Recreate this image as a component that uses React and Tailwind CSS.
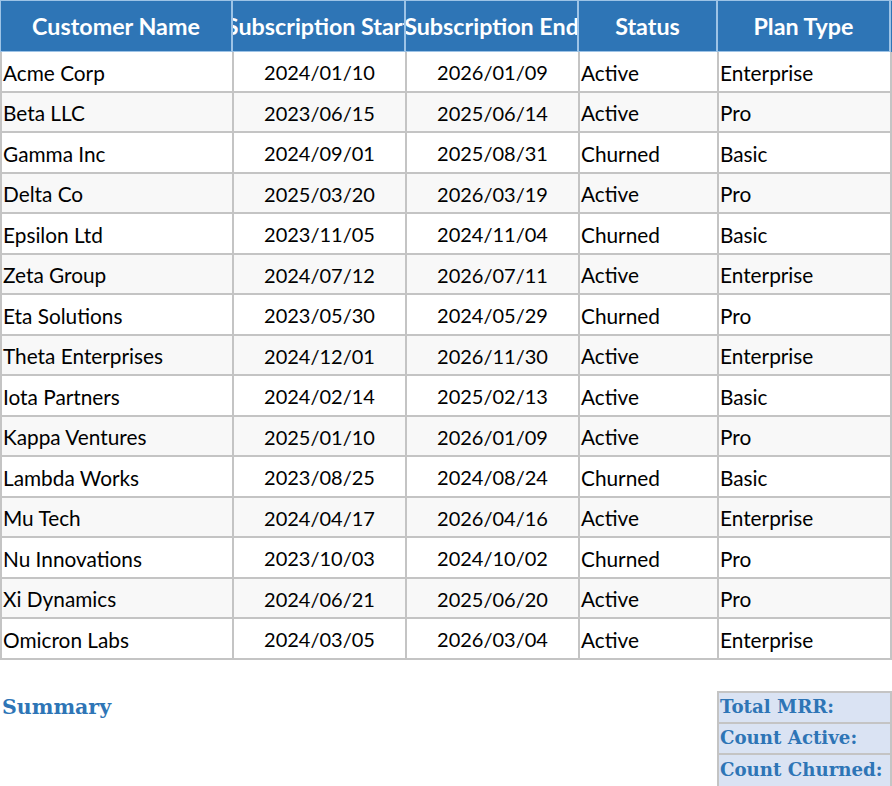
const rows = [
  ['Acme Corp', '2024/01/10', '2026/01/09', 'Active', 'Enterprise'],
  ['Beta LLC', '2023/06/15', '2025/06/14', 'Active', 'Pro'],
  ['Gamma Inc', '2024/09/01', '2025/08/31', 'Churned', 'Basic'],
  ['Delta Co', '2025/03/20', '2026/03/19', 'Active', 'Pro'],
  ['Epsilon Ltd', '2023/11/05', '2024/11/04', 'Churned', 'Basic'],
  ['Zeta Group', '2024/07/12', '2026/07/11', 'Active', 'Enterprise'],
  ['Eta Solutions', '2023/05/30', '2024/05/29', 'Churned', 'Pro'],
  ['Theta Enterprises', '2024/12/01', '2026/11/30', 'Active', 'Enterprise'],
  ['Iota Partners', '2024/02/14', '2025/02/13', 'Active', 'Basic'],
  ['Kappa Ventures', '2025/01/10', '2026/01/09', 'Active', 'Pro'],
  ['Lambda Works', '2023/08/25', '2024/08/24', 'Churned', 'Basic'],
  ['Mu Tech', '2024/04/17', '2026/04/16', 'Active', 'Enterprise'],
  ['Nu Innovations', '2023/10/03', '2024/10/02', 'Churned', 'Pro'],
  ['Xi Dynamics', '2024/06/21', '2025/06/20', 'Active', 'Pro'],
  ['Omicron Labs', '2024/03/05', '2026/03/04', 'Active', 'Enterprise'],
];

const headers = ['Customer Name', 'Subscription Start', 'Subscription End', 'Status', 'Plan Type'];

const cols = 'grid grid-cols-[232px_173px_173px_139px_173px]';

export default function App() {
  return (
    <div className="w-[892px] h-[786px] overflow-hidden bg-white font-['Lato',sans-serif] text-[20.8px] text-black">
      <div className={`${cols} h-[52px] bg-[#2e75b6] border-t border-l border-[#9dc3e6]`}>
        {headers.map((h) => (
          <div
            key={h}
            className="flex items-center justify-center overflow-hidden whitespace-nowrap border-r-2 border-b border-[#9dc3e6] font-bold text-[23.3px] text-white"
          >
            {h}
          </div>
        ))}
      </div>
      {rows.map((r, i) => (
        <div
          key={r[0]}
          className={`${cols} h-[40.5px] border-l-2 border-[#c4c4c4] ${i % 2 ? 'bg-[#f8f8f8]' : 'bg-white'}`}
        >
          {r.map((c, j) => (
            <div
              key={j}
              className={`flex items-center overflow-hidden whitespace-nowrap border-r-2 border-b-2 border-[#c4c4c4] pt-[2px] ${
                j === 1 || j === 2 ? 'justify-center text-[20px]' : 'pl-[1px]'
              }`}
            >
              {c}
            </div>
          ))}
        </div>
      ))}
      <div className="flex justify-between mt-[31px]">
        <div className="pl-[2px] pt-[1px] font-['DejaVu_Serif',serif] font-bold text-[20.5px] text-[#2e75b6]">
          Summary
        </div>
        <div className="w-[175px] border-2 border-[#c4c4c4] bg-[#dae3f3] font-['DejaVu_Serif',serif] font-bold text-[18.2px] text-[#2e75b6]">
          {['Total MRR:', 'Count Active:', 'Count Churned:'].map((t, i) => (
            <div key={t} className={`h-[31px] flex items-center pl-[1px] whitespace-nowrap overflow-hidden ${i < 2 ? 'border-b-2 border-[#c4c4c4]' : ''}`}>
              {t}
            </div>
          ))}
        </div>
      </div>
    </div>
  );
}
